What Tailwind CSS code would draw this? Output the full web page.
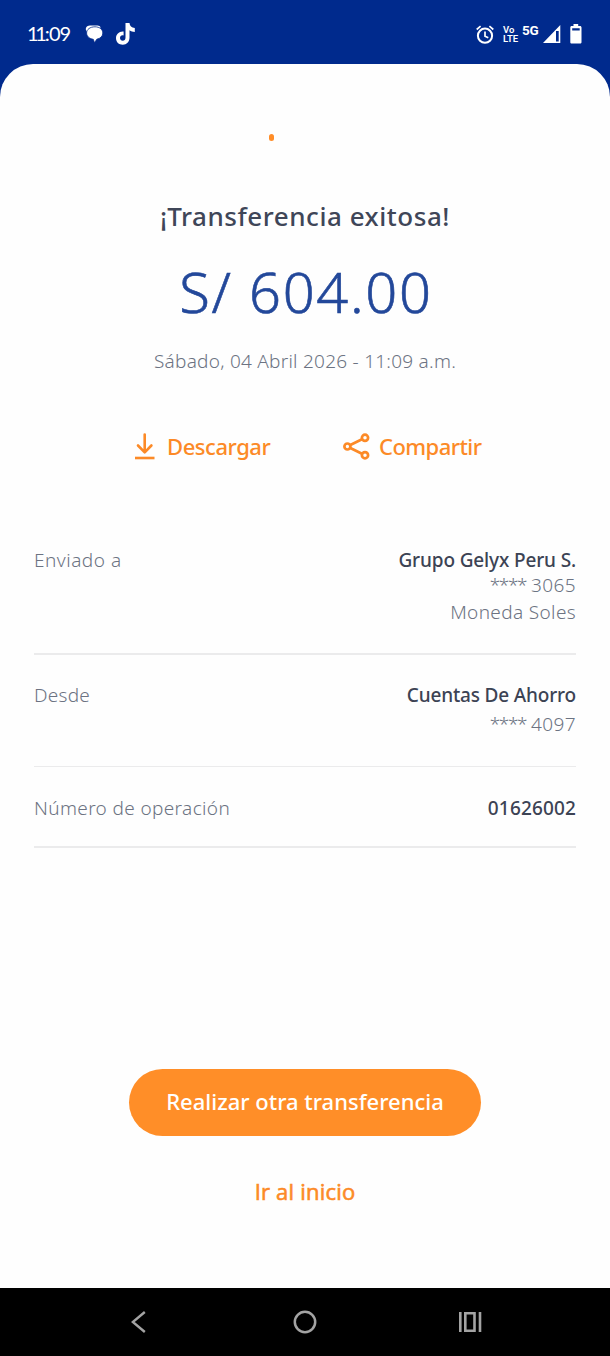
<!DOCTYPE html>
<html lang="es">
<head>
<meta charset="utf-8">
<title>Transferencia exitosa</title>
<script src="https://cdn.jsdelivr.net/npm/@tailwindcss/browser@4"></script>
</head>
<body class="bg-white">
<div class="w-[610px] h-[1356px] flex flex-col bg-[#002a8d] font-['Noto_Sans',sans-serif] text-[#6c7382] whitespace-nowrap overflow-hidden">
  <header class="h-16 shrink-0 flex items-center justify-between pl-[27px] pr-7 pt-1 text-white">
    <div class="flex items-center">
      <span class="w-[43px] pb-0.5 text-[20px] leading-6 tracking-[-0.9px] font-['Lato',sans-serif]"><span class="tracking-[-3.4px]">1</span><span class="tracking-[-2px]">1</span>:09</span>
      <svg class="ml-[15px] w-[18px] h-[18px]" viewBox="0 0 18 18" fill="currentColor"><path d="M6 .5h6.500c1.500 0 2.700.8 3.200 2L2.500 7C-.3 5 0 .5 6 .5z"/><path stroke="#002a8d" stroke-width=".8" d="M10 1.800c4.500 0 7.800 2.700 7.800 6.200 0 3.200-2.400 5.500-6 6.200L9.500 17.800 8.300 14.300C4.500 13.700 1.600 11.300 1.600 8c0-3.500 3.400-6.200 8.400-6.200z"/></svg>
      <svg class="ml-[13px] w-[19px] h-[22px]" viewBox="0 0 19 22" fill="currentColor"><path d="M9.500 0h4c.2 2.900 2.100 4.700 5.300 5v3.900c-2 0-3.800-.6-5.300-1.700v7.300c0 4.400-2.900 7.200-6.700 7.200C2.800 21.700 0 18.900 0 15.200c0-4.100 3.300-7.200 7.600-6.700v4c-2.200-.6-3.600.7-3.600 2.600 0 1.600 1.200 2.700 2.700 2.700 1.700 0 2.800-1.200 2.800-3.300z"/></svg>
    </div>
    <div class="flex items-center">
      <svg class="w-[18px] h-[19px]" viewBox="0 0 18 19" fill="none" stroke="currentColor" stroke-width="2"><circle cx="9" cy="10.700" r="7.100"/><path d="M9 6.500v4.700l3.300 1.600M.7 4.500 4.600 1.200M17.300 4.500 13.400 1.200" stroke-width="1.700"/></svg>
      <div class="ml-[9px] w-4 flex flex-col font-['Roboto',sans-serif] font-semibold text-[9.500px] leading-[9px]"><span>Vo</span><span>LTE</span></div>
      <span class="ml-[3px] w-[18px] pb-[9px] font-['Roboto',sans-serif] font-bold text-[13.500px] leading-4 tracking-[-0.300px]">5G</span>
      <svg class="ml-[3px] w-[18px] h-[18px]" viewBox="0 0 18 18"><path fill="currentColor" fill-rule="evenodd" d="M17.300 0v18H0zM13 6v10.500h2.700V6z"/></svg>
      <svg class="ml-[9px] w-3 h-5" viewBox="0 0 12 20" fill="currentColor"><path fill-rule="evenodd" d="M3.500 0h4.700v2H10c.9 0 1.500.6 1.500 1.500v14.700c0 .8-.6 1.400-1.500 1.400H1.700C.8 19.600.3 19 .3 18.200V3.500C.3 2.600.8 2 1.700 2h1.800zM2.200 4.300v2.200h7.500V4.300z"/></svg>
    </div>
  </header>

  <main class="h-[1224px] shrink-0 flex flex-col bg-[#fefefe] rounded-t-[33px]">
    <div class="h-[134px] pt-[70px] pl-[269px]"><div class="w-[5px] h-[7px] rounded-full bg-[#ff8d28]"></div></div>
    <h1 class="h-9 text-center text-[26px] leading-9 font-medium tracking-[0.540px] text-[#3f4658]">¡Transferencia exitosa!</h1>
    <p class="mt-[25px] h-16 pl-0.5 text-center text-[56px] leading-[64px] font-light tracking-[1.700px] text-[#23489a] [-webkit-text-stroke:0.6px_#23489a]">S/ 604.00</p>
    <p class="mt-6 h-7 text-center text-[19px] leading-7 font-light tracking-[0.250px]">Sábado, 04 Abril 2026 - 11:09 a.m.</p>

    <div class="mt-[53px] h-9 flex items-center pl-[134px] text-[22px] leading-9 font-medium text-[#fc8a27]">
      <svg class="w-[22px] h-[27px]" viewBox="0 0 22 27" fill="none" stroke="currentColor" stroke-width="2.600"><path d="M10.700 1.500v17.500M4 12.500l6.700 6.800 6.700-6.800" stroke-linejoin="round" stroke-linecap="round"/><path d="M1 25h19.500"/></svg>
      <span class="ml-[11px] w-[104px] tracking-[-0.450px]">Descargar</span>
      <svg class="ml-[72px] w-[27px] h-[27px]" viewBox="0 0 27 27" fill="none" stroke="currentColor" stroke-width="2.700"><circle cx="4.400" cy="13.500" r="3"/><circle cx="22" cy="4.800" r="3.100"/><circle cx="22" cy="22.200" r="3.100"/><path d="M7.300 12 19 6.200M7.300 15 19 20.700"/></svg>
      <span class="ml-[9px] tracking-[-0.550px]">Compartir</span>
    </div>

    <section class="mt-[83px] mx-[34px] flex flex-col text-[19px] leading-[26px] font-light">
      <div class="h-[108px] flex justify-between border-b-2 border-[#ebebec]">
        <span class="tracking-[0.500px]">Enviado a</span>
        <div class="flex flex-col items-end">
          <span class="font-medium tracking-[-0.140px] text-[#3c4354]">Grupo Gelyx Peru S.</span>
          <span class="-mt-px mb-px"><span class="tracking-[-1.400px]">****</span> <span class="tracking-[0.400px]">3065</span></span>
          <span class="tracking-[0.360px]">Moneda Soles</span>
        </div>
      </div>
      <div class="h-28 pt-[27px] flex justify-between border-b border-[#ebebec]">
        <span class="tracking-[0.250px]">Desde</span>
        <div class="flex flex-col items-end gap-[3px]">
          <span class="font-medium tracking-[-0.170px] text-[#3c4354]">Cuentas De Ahorro</span>
          <span><span class="tracking-[-1.400px]">****</span> <span class="tracking-[0.400px]">4097</span></span>
        </div>
      </div>
      <div class="h-[81px] pt-7 flex justify-between border-b-2 border-[#ebebec]">
        <span class="tracking-[0.370px]">Número de operación</span>
        <span class="font-medium tracking-[0.150px] text-[#3c4354]">01626002</span>
      </div>
    </section>

    <div class="mt-[221px] flex flex-col items-center text-[22px] font-medium">
      <button class="w-[352px] h-[67px] pb-0.5 rounded-full bg-[#ff8e28] text-white">Realizar otra transferencia</button>
      <a class="mt-[37px] leading-9 font-['Open_Sans',sans-serif] tracking-[0.200px] text-[#fc8a27] [-webkit-text-stroke:0.600px_#fc8a27]">Ir al inicio</a>
    </div>
  </main>

  <nav class="h-[68px] shrink-0 bg-black text-[#a3a3a3] flex items-center pl-[131px]">
    <svg class="w-[15px] h-[22px]" viewBox="0 0 15 22" fill="none" stroke="currentColor" stroke-width="2.400"><path d="M13.800 1 1.800 11l12 10"/></svg>
    <svg class="ml-[147px] w-6 h-6" viewBox="0 0 24 24" fill="none" stroke="currentColor" stroke-width="2.500"><circle cx="12" cy="12" r="10.200"/></svg>
    <svg class="ml-[141px] w-6 h-5" viewBox="0 0 24 20" fill="none" stroke="currentColor" stroke-width="2.600"><path d="M2.300 0v20M22 0v20"/><path d="M7.300 1.300h9.200v17.400H7.300z"/></svg>
  </nav>
</div>
</body>
</html>
